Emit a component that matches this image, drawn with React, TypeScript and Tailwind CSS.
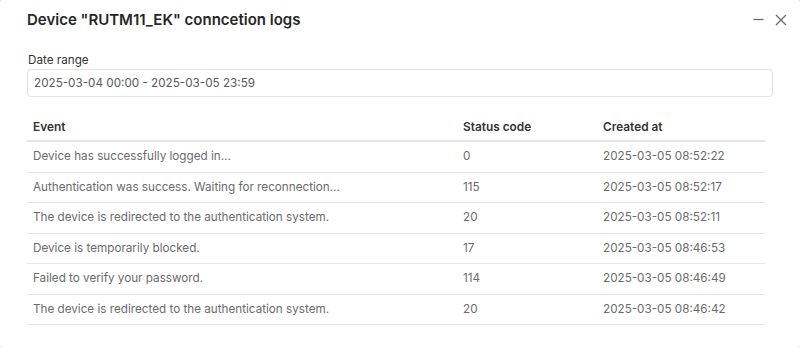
import React from "react";

const rows = [
  ["Device has successfully logged in...", "0", "2025-03-05 08:52:22"],
  ["Authentication was success. Waiting for reconnection...", "115", "2025-03-05 08:52:17"],
  ["The device is redirected to the authentication system.", "20", "2025-03-05 08:52:11"],
  ["Device is temporarily blocked.", "17", "2025-03-05 08:46:53"],
  ["Failed to verify your password.", "114", "2025-03-05 08:46:49"],
  ["The device is redirected to the authentication system.", "20", "2025-03-05 08:46:42"],
];

export default function App() {
  return (
    <div className="w-[800px] h-[348px] bg-[#e4e4e4]">
      <div
        className="w-full h-full bg-white rounded-[3px] overflow-hidden"
        style={{ fontFamily: "Inter, 'Noto Sans', sans-serif" }}
      >
        <div className="flex items-center justify-between pl-[27px] pr-[13px] h-[39px]">
          <h1 className="text-[15px] font-semibold text-[#262626] leading-5">
            Device "RUTM11_EK" conncetion logs
          </h1>
          <div className="flex items-center gap-[11px] text-[#6b6b6b]">
            <svg width="11" height="11" viewBox="0 0 11 11" fill="none">
              <path d="M0.5 5.5h10" stroke="currentColor" strokeWidth="1.3" />
            </svg>
            <svg width="12" height="12" viewBox="0 0 12 12" fill="none">
              <path d="M1 1l10 10M11 1L1 11" stroke="currentColor" strokeWidth="1.3" />
            </svg>
          </div>
        </div>

        <div className="px-[27px] pt-[13px]">
          <div className="text-[11.7px] leading-4 text-[#333] pl-[1px]">Date range</div>
          <div className="mt-[1px] h-[28px] border border-[#e3e3e3] rounded-[4px] flex items-center px-[6px] pt-[1px] text-[11.7px] text-[#595959]">
            2025-03-04 00:00 - 2025-03-05 23:59
          </div>
        </div>

        <div className="pl-[27px] pr-[35px] pt-[15px]">
          <div className="grid grid-cols-[430px_140px_1fr] h-[30px] pt-[4px] items-center border-b-2 border-[#e6e6e6] text-[11.85px] font-semibold text-[#333]">
            <div className="px-[6px]">Event</div>
            <div className="px-[6px]">Status code</div>
            <div className="px-[6px]">Created at</div>
          </div>
          {rows.map((r, i) => (
            <div
              key={i}
              className="grid grid-cols-[430px_140px_1fr] h-[30.5px] pt-[1px] items-center border-b border-[#e6e6e6] text-[11.7px] text-[#6b6b6b]"
            >
              <div className="px-[6px]">{r[0]}</div>
              <div className="px-[6px]">{r[1]}</div>
              <div className="px-[6px]">{r[2]}</div>
            </div>
          ))}
        </div>
      </div>
    </div>
  );
}
